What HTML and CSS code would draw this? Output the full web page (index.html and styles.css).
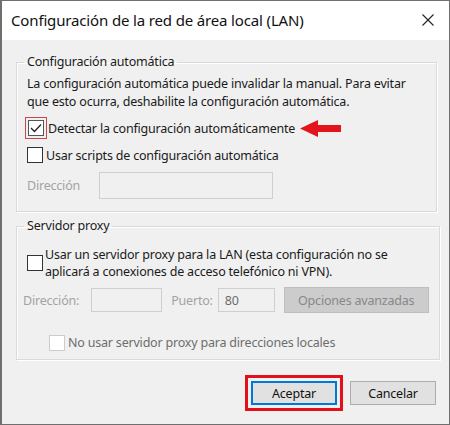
FILE: index.html
```html
<!DOCTYPE html>
<html lang="es">
<head>
    <meta charset="UTF-8">
    <title>Configuración de la red de área local (LAN)</title>
    <link rel="stylesheet" href="styles.css">
</head>
<body>
    <div class="window">
        <div class="titlebar">
            <span class="title">Configuración de la red de área local (LAN)</span>
            <svg class="close" width="12" height="12" viewBox="0 0 12 12">
                <path d="M0.5 0.5 L11.5 11.5 M11.5 0.5 L0.5 11.5" stroke="#222" stroke-width="1.1" fill="none"/>
            </svg>
        </div>

        <div class="content">
            <fieldset class="group auto">
                <legend>Configuración automática</legend>
                <p class="note">La configuración automática puede invalidar la manual. Para evitar que esto ocurra, deshabilite la configuración automática.</p>

                <div class="check-row first">
                    <span class="highlight">
                        <span class="box checked">
                            <svg width="12" height="10" viewBox="0 0 12 10">
                                <path d="M1 5 L4.5 8.5 L11 1.5" stroke="#222" stroke-width="1.3" fill="none"/>
                            </svg>
                        </span>
                    </span>
                    <span class="label">Detectar la configuración automáticamente</span>
                    <svg class="arrow" width="42" height="17" viewBox="0 0 42 17">
                        <polygon points="0,8.5 18,0 18,5 41,5 41,12 18,12 18,17" fill="#e3141c"/>
                    </svg>
                </div>

                <div class="check-row second">
                    <span class="box"></span>
                    <span class="label">Usar scripts de configuración automática</span>
                </div>

                <div class="field-row">
                    <span class="muted addr">Dirección</span>
                    <span class="input wide"></span>
                </div>
            </fieldset>

            <fieldset class="group proxy">
                <legend>Servidor proxy</legend>

                <div class="check-row multi">
                    <span class="box"></span>
                    <span class="label">Usar un servidor proxy para la LAN (esta configuración no se aplicará a conexiones de acceso telefónico ni VPN).</span>
                </div>

                <div class="field-row proxy-fields">
                    <span class="muted">Dirección:</span>
                    <span class="input small"></span>
                    <span class="muted port">Puerto:</span>
                    <span class="input port-input">80</span>
                    <span class="btn disabled">Opciones avanzadas</span>
                </div>

                <div class="check-row bypass">
                    <span class="box off"></span>
                    <span class="label muted-dark">No usar servidor proxy para direcciones locales</span>
                </div>
            </fieldset>

            <div class="actions">
                <span class="btn primary">Aceptar</span>
                <span class="btn">Cancelar</span>
            </div>
        </div>
    </div>
</body>
</html>
```

FILE: styles.css
```css
html, body {
    margin: 0;
    padding: 0;
}
body {
    width: 450px;
    height: 425px;
    font-family: "Noto Sans", "Open Sans", sans-serif;
    font-size: 12.5px;
    letter-spacing: -0.2px;
    color: #1a1a1a;
    background: #fff;
}
.window {
    box-sizing: border-box;
    width: 450px;
    height: 425px;
    border: 1px solid #6f6f6f;
    border-left-width: 2px;
    display: flex;
    flex-direction: column;
    background: #f0f0f0;
}
.titlebar {
    height: 39px;
    background: #fff;
    display: flex;
    align-items: center;
    justify-content: space-between;
    padding: 0 15px 0 9px;
    flex-shrink: 0;
}
.title {
    font-size: 15px;
    letter-spacing: -0.15px;
    color: #111;
    margin-top: -2px;
}
.close {
    margin-top: -1px;
}
.content {
    flex: 1;
    padding: 0 12px 0 14px;
    display: flex;
    flex-direction: column;
}
.group {
    margin: 0;
    border: 1px solid #dadada;
    box-shadow: 1px 1px 0 #fff, inset 1px 1px 0 #fff;
    padding: 0 10px 0 10px;
}
.group legend {
    padding: 0 3px;
    margin-left: -3px;
    line-height: 16px;
}
.auto {
    margin-top: 14px;
    padding-bottom: 12px;
}
.note {
    margin: 5px 0 0;
    line-height: 18px;
}
.check-row {
    display: flex;
    align-items: center;
}
.check-row.first {
    margin-top: 6px;
    height: 22px;
    margin-left: -2px;
}
.check-row.second {
    margin-top: 5px;
    height: 22px;
}
.highlight {
    border: 1px solid #c8454b;
    padding: 2px;
    display: flex;
}
.box {
    box-sizing: border-box;
    width: 16px;
    height: 16px;
    border: 1px solid #333;
    background: #fff;
    display: flex;
    align-items: center;
    justify-content: center;
    flex-shrink: 0;
}
.box.checked {
    border-color: #555;
}
.box.off {
    border-color: #cccccc;
}
.label {
    margin-left: 3px;
}
.first .label {
    margin-left: 1px;
}
.arrow {
    margin-left: 5px;
}
.field-row {
    display: flex;
    align-items: center;
}
.auto .field-row {
    margin-top: 6px;
}
.muted {
    color: #a3a3a3;
}
.muted-dark {
    color: #6d6d6d;
}
.addr {
    width: 72px;
}
.input {
    box-sizing: border-box;
    border: 1px solid #cfcfcf;
    background: #f0f0f0;
    height: 24px;
    display: flex;
    align-items: center;
    padding-left: 6px;
    color: #6d6d6d;
}
.input.wide {
    width: 174px;
    height: 27px;
}
.proxy {
    margin-top: 6px;
    padding-bottom: 7px;
}
.multi {
    margin-top: 12px;
    line-height: 17px;
}
.multi .label {
    margin-left: 2px;
}
.proxy-fields {
    margin-top: 7px;
    margin-left: -4px;
}
.input.small {
    width: 71px;
    margin-left: 12px;
}
.port {
    margin-left: 9px;
}
.input.port-input {
    width: 57px;
    margin-left: 5px;
}
.btn {
    box-sizing: border-box;
    height: 24px;
    width: 86px;
    border: 1px solid #adadad;
    background: #e1e1e1;
    display: flex;
    align-items: center;
    justify-content: center;
    color: #111;
}
.btn.disabled {
    width: 145px;
    height: 26px;
    margin-left: 9px;
    background: #cccccc;
    border-color: #bfbfbf;
    color: #888;
}
.bypass {
    margin-top: 20px;
    margin-left: 22px;
    height: 19px;
}
.actions {
    display: flex;
    justify-content: flex-end;
    gap: 13px;
    margin-top: 21px;
    padding-right: 1px;
}
.btn.primary {
    border: 1px solid #0078d7;
    box-shadow: inset 0 0 0 1px #0078d7;
    outline: 3px solid #e3101b;
    outline-offset: 3px;
}
```
